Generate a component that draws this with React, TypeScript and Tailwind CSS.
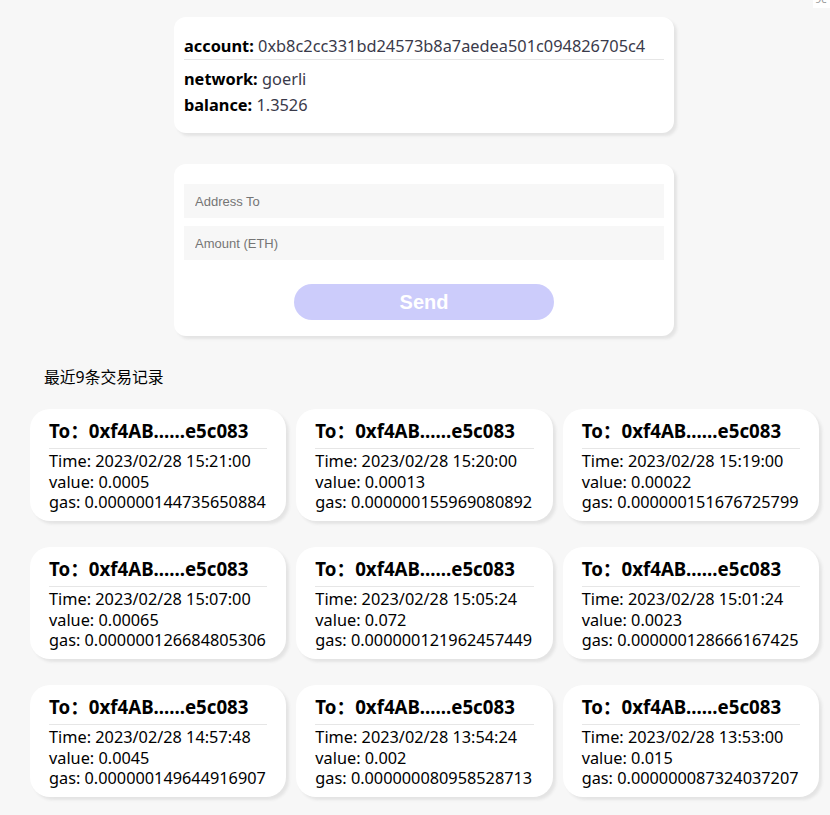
import React from "react";

const txs = [
  { time: "2023/02/28 15:21:00", value: "0.0005", gas: "0.000000144735650884" },
  { time: "2023/02/28 15:20:00", value: "0.00013", gas: "0.000000155969080892" },
  { time: "2023/02/28 15:19:00", value: "0.00022", gas: "0.000000151676725799" },
  { time: "2023/02/28 15:07:00", value: "0.00065", gas: "0.000000126684805306" },
  { time: "2023/02/28 15:05:24", value: "0.072", gas: "0.000000121962457449" },
  { time: "2023/02/28 15:01:24", value: "0.0023", gas: "0.000000128666167425" },
  { time: "2023/02/28 14:57:48", value: "0.0045", gas: "0.000000149644916907" },
  { time: "2023/02/28 13:54:24", value: "0.002", gas: "0.000000080958528713" },
  { time: "2023/02/28 13:53:00", value: "0.015", gas: "0.000000087324037207" },
];

const font = "font-['Noto_Sans','Noto_Sans_CJK_SC',sans-serif]";

export default function App() {
  return (
    <div className={`relative w-[830px] h-[815px] overflow-hidden bg-[#f7f7f7] ${font} text-black`}>
      <div className="absolute right-0 top-[-10px] w-[17px] h-[18px] bg-white text-[11px] text-[#999] leading-[18px] pl-[2px]">9c</div>

      <div className="pt-[17px] ml-[174px] w-[500px]">
        <div className="bg-white rounded-[12px] shadow-[3px_3px_3px_#e4e4e4] px-[10px] pt-[16px] pb-[15px] text-[16.35px]">
          <div className="leading-[26px] border-b border-[#e6e6e6] whitespace-nowrap">
            <span className="font-bold">account:</span>{" "}
            <span className="text-[#3a3a4a]">0xb8c2cc331bd24573b8a7aedea501c094826705c4</span>
          </div>
          <div className="mt-[6px] leading-[26px]">
            <span className="font-bold">network:</span> <span className="text-[#3a3a4a]">goerli</span>
          </div>
          <div className="leading-[26px]">
            <span className="font-bold">balance:</span> <span className="text-[#3a3a4a]">1.3526</span>
          </div>
        </div>

        <div className="mt-[31px] bg-white rounded-[12px] shadow-[3px_3px_3px_#e4e4e4] px-[10px] pt-[20px] pb-[16px]">
          <input
            placeholder="Address To"
            className="block w-full h-[34px] bg-[#f7f7f7] px-[11px] text-[13px] font-['Liberation_Sans',Arial,sans-serif] placeholder:text-[#757575] outline-none"
          />
          <input
            placeholder="Amount (ETH)"
            className="block mt-[8px] w-full h-[34px] bg-[#f7f7f7] px-[11px] text-[13px] font-['Liberation_Sans',Arial,sans-serif] placeholder:text-[#757575] outline-none"
          />
          <div className="flex justify-center mt-[24px]">
            <button className="w-[260px] h-[36px] rounded-full bg-[#ccccfb] text-white font-bold text-[20px] font-['Liberation_Sans',Arial,sans-serif]">
              Send
            </button>
          </div>
        </div>
      </div>

      <div className="ml-[44px] mt-[31px] text-[15.8px] leading-[20px]">最近9条交易记录</div>

      <div className="ml-[30px] mt-[22px] w-[789px] grid grid-cols-3 gap-x-[10px] gap-y-[26px]">
        {txs.map((t, i) => (
          <div key={i} className="h-[112px] bg-white rounded-[20px] shadow-[3px_3px_3px_#e4e4e4] px-[19px] pt-[10px]">
            <div className="font-bold text-[18.7px] leading-[24px] pb-[5px] border-b border-[#e6e6e6] whitespace-nowrap">
              To：0xf4AB......e5c083
            </div>
            <div className="mt-[2px] text-[16.3px] leading-[20.5px] whitespace-nowrap">
              <div>Time: {t.time}</div>
              <div>value: {t.value}</div>
              <div>gas: {t.gas}</div>
            </div>
          </div>
        ))}
      </div>
    </div>
  );
}
